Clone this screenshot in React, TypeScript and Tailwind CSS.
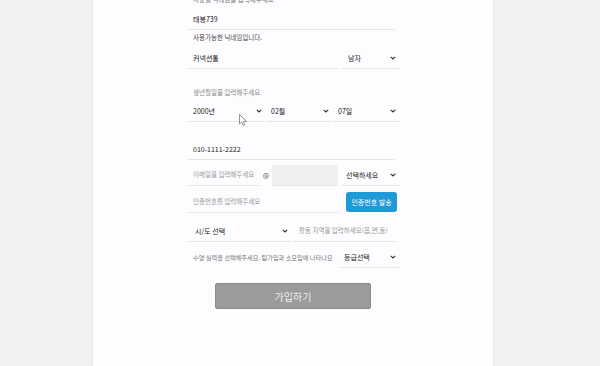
import React from "react";

const Chevron = () => (
  <svg width="6" height="4" viewBox="0 0 6 4" className="shrink-0">
    <polyline points="0.8,0.8 3,3 5.2,0.8" fill="none" stroke="#333" strokeWidth="1.1" />
  </svg>
);

const Field = ({ text, placeholder = false, className = "" }: { text: string; placeholder?: boolean; className?: string }) => (
  <div className={`flex items-center h-full border-b border-[#e6e6e6] pl-[6px] ${className}`}>
    <span className={placeholder ? "text-[6.5px] text-[#9a9a9a]" : "text-[7px] text-[#1a1a1a]"}>{text}</span>
  </div>
);

const Select = ({ text, className = "", pl = "pl-[6px]" }: { text: string; className?: string; pl?: string }) => (
  <div className={`flex items-center justify-between h-full border-b border-[#e6e6e6] ${pl} pr-[3px] ${className}`}>
    <span className="text-[7px] text-[#222]">{text}</span>
    <Chevron />
  </div>
);

const App = () => {
  return (
    <div
      className="relative h-[366px] w-[600px] overflow-hidden bg-[#f1f1f1]"
      style={{ fontFamily: '"Noto Sans CJK KR", "Noto Sans", sans-serif' }}
    >
      <div className="ml-[93px] h-full w-[400px] bg-[#fdfcfe] shadow-[0_0_2px_rgba(0,0,0,0.1)]">
        <div className="ml-[94px] flex w-[212px] flex-col">
          <div className="-mt-[6px] h-[10px] pl-[6px] text-[6.5px] leading-[10px] text-[#777]">사용할 닉네임을 입력해주세요</div>

          <div className="mt-[6px] h-[20px] w-[208px]">
            <Field text="태봉739" />
          </div>
          <div className="h-[14px] pl-[6px] text-[6.5px] leading-[14px] text-[#444]">사용가능한 닉네임입니다.</div>

          <div className="mt-[4px] flex h-[21px] gap-[3px]">
            <Field text="커넥션톨" className="w-[152px]" />
            <Select text="남자" className="w-[57px]" />
          </div>

          <div className="mt-[17px] h-[12px] pl-[6px] text-[6.5px] leading-[12px] text-[#8a8a8a]">생년월일을 입력해주세요</div>

          <div className="mt-[3px] flex h-[21px] gap-[2px]">
            <Select text="2000년" className="w-[78px]" />
            <Select text="02월" pl="pl-[4px]" className="w-[65px]" />
            <Select text="07일" pl="pl-[4px]" className="w-[65px]" />
          </div>

          <div className="mt-[17px] h-[21px] w-[208px]">
            <Field text="010-1111-2222" />
          </div>

          <div className="mt-[5px] flex h-[21px] items-stretch">
            <Field text="이메일을 입력해주세요" placeholder className="w-[73px]" />
            <div className="flex w-[12px] items-center justify-center text-[7px] text-[#555]">@</div>
            <div className="w-[66px] border-b border-[#e6e6e6] bg-[#f0f0f0]" />
            <Select text="선택하세요" pl="pl-[4px]" className="ml-[4px] w-[57px]" />
          </div>

          <div className="mt-[6px] flex h-[21px] items-start">
            <Field text="인증번호를 입력해주세요" placeholder className="w-[152px]" />
            <button className="ml-[7px] flex h-[20px] w-[51px] items-center justify-center rounded-[3px] bg-[#1e9ad6] text-[7px] text-white">
              인증번호 발송
            </button>
          </div>

          <div className="mt-[8px] flex h-[21px] gap-[2px]">
            <Select text="시/도 선택" pl="pl-[8px]" className="w-[104px]" />
            <Field text="활동 지역을 입력하세요(읍,면,동)" placeholder className="w-[104px]" />
          </div>

          <div className="mt-[5px] flex h-[21px]">
            <div className="flex flex-1 items-center pl-[6px] text-[6.2px] text-[#777]">수영 실력을 선택해주세요. 팀가입과 소모임에 나타나요</div>
            <Select text="등급선택" pl="pl-[5px]" className="w-[60px]" />
          </div>

          <button className="mx-auto mt-[15px] flex h-[26px] w-[156px] items-center justify-center rounded-[2px] border border-[#8a8a8a] bg-[#9b9b9b] text-[10px] text-[#eeeeee]">
            가입하기
          </button>
        </div>
      </div>

      <svg className="absolute left-[239px] top-[114px]" width="9" height="13" viewBox="0 0 9 13">
        <path d="M0.5 0.5 L0.5 10 L2.8 7.9 L4.4 11.6 L5.9 11 L4.4 7.4 L7.6 7.4 Z" fill="#fff" stroke="#777" strokeWidth="0.8" strokeLinejoin="round" />
      </svg>
    </div>
  );
};

export default App;
